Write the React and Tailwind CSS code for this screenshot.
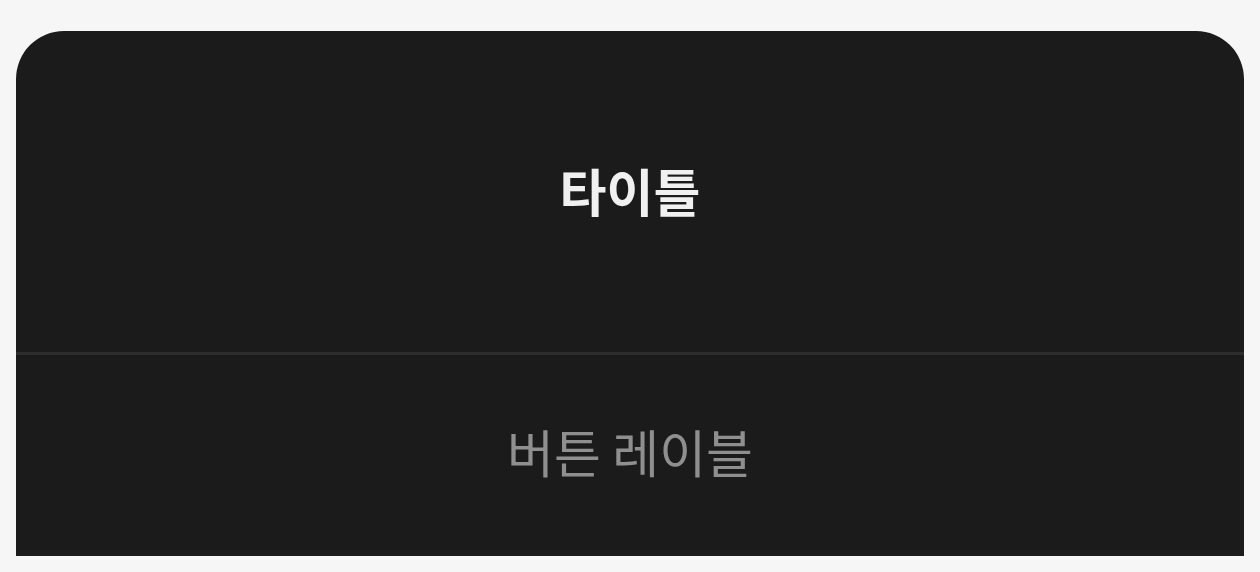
export default function App() {
  return (
    <div className="min-h-screen bg-[#f6f6f6] px-4 pt-[31px] font-['Noto_Sans_CJK_KR','Noto_Sans',sans-serif]">
      <div className="overflow-hidden rounded-t-[48px] bg-[#1b1b1b]">
        <div className="flex h-[321px] items-center justify-center pb-[3px]">
          <h1 className="text-[51px] font-bold leading-none text-[#f0f0f0]">타이틀</h1>
        </div>
        <div className="h-[3px] bg-[#2d2d2d]" />
        <button className="flex h-[201px] w-full items-center justify-center pb-[9px] text-[51px] leading-none text-[#8f8f8f]">
          버튼 레이블
        </button>
      </div>
    </div>
  )
}
